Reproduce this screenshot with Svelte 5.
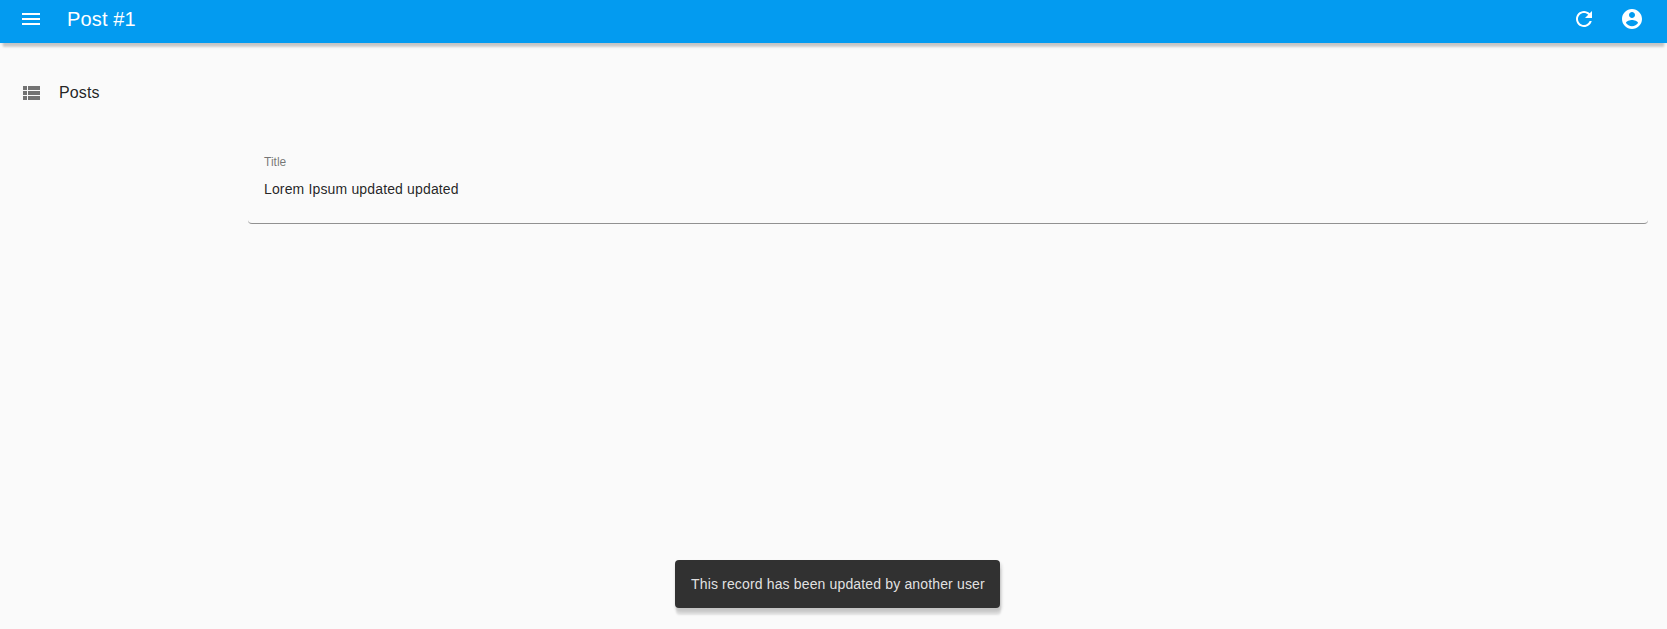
<script>
	const title = 'Post #1';
	const message = 'This record has been updated by another user';
</script>

<div class="page">
	<header class="appbar">
		<button class="icon-btn menu" aria-label="menu">
			<svg viewBox="0 0 24 24"><path d="M3 18h18v-2H3v2zm0-5h18v-2H3v2zm0-7v2h18V6H3z" /></svg>
		</button>
		<h1>{title}</h1>
		<div class="actions">
			<button class="icon-btn" aria-label="refresh">
				<svg viewBox="0 0 24 24"><path d="M17.65 6.35C16.2 4.9 14.21 4 12 4c-4.42 0-7.99 3.58-7.99 8s3.57 8 7.99 8c3.73 0 6.84-2.55 7.73-6h-2.08c-.82 2.33-3.04 4-5.65 4-3.31 0-6-2.69-6-6s2.69-6 6-6c1.66 0 3.14.69 4.22 1.78L13 11h7V4l-2.35 2.35z" /></svg>
			</button>
			<button class="icon-btn" aria-label="account">
				<svg viewBox="0 0 24 24"><path d="M12 2C6.48 2 2 6.48 2 12s4.48 10 10 10 10-4.48 10-10S17.52 2 12 2zm0 3c1.66 0 3 1.34 3 3s-1.34 3-3 3-3-1.34-3-3 1.34-3 3-3zm0 14.2c-2.5 0-4.71-1.28-6-3.22.03-1.99 4-3.08 6-3.08 1.99 0 5.97 1.09 6 3.08-1.29 1.94-3.5 3.22-6 3.22z" /></svg>
			</button>
		</div>
	</header>

	<div class="body">
		<nav class="sidebar">
			<a class="nav-item" href="#posts">
				<svg viewBox="0 0 24 24"><path d="M4 14h4v-4H4v4zm0 5h4v-4H4v4zM4 9h4V5H4v4zm5 5h12v-4H9v4zm0 5h12v-4H9v4zM9 5v4h12V5H9z" /></svg>
				<span>Posts</span>
			</a>
		</nav>
		<main class="content">
			<div class="card">
				<span class="label">Title</span>
				<span class="value">Lorem Ipsum updated updated</span>
			</div>
		</main>
	</div>

	<div class="snackbar">{message}</div>
</div>

<style>
	:global(body) {
		margin: 0;
		background: #fafafa;
		font-family: "Liberation Sans", Arial, sans-serif;
	}

	.page {
		position: relative;
		height: 629px;
		overflow: hidden;
		background: #fafafa;
	}

	.appbar {
		display: flex;
		align-items: center;
		height: 43px;
		padding: 0 11px 5px 7px;
		box-sizing: border-box;
		background: #039bf0;
		color: #fff;
		box-shadow: 0 7px 2px -3px rgba(0, 0, 0, 0.16), 0 2px 3px 0 rgba(0, 0, 0, 0.08);
	}

	.icon-btn {
		display: flex;
		align-items: center;
		justify-content: center;
		width: 48px;
		height: 38px;
		padding: 0;
		border: none;
		background: none;
		color: inherit;
	}

	.icon-btn svg {
		width: 24px;
		height: 24px;
		fill: currentColor;
	}

	.menu {
		width: 47px;
		margin-right: 13px;
	}

	h1 {
		margin: 0;
		flex: 1;
		font-size: 20px;
		font-weight: 400;
		letter-spacing: 0.0075em;
		line-height: 1.6;
	}

	.actions {
		display: flex;
	}

	.body {
		display: flex;
	}

	.sidebar {
		width: 248px;
		flex-shrink: 0;
		padding-top: 32px;
	}

	.nav-item {
		display: flex;
		align-items: center;
		gap: 16px;
		padding: 6px 19px;
		color: rgba(0, 0, 0, 0.87);
		font-size: 16px;
		letter-spacing: 0.00938em;
		line-height: 24px;
		text-decoration: none;
	}

	.nav-item svg {
		width: 24px;
		height: 24px;
		fill: rgba(0, 0, 0, 0.54);
	}

	.content {
		flex: 1;
		padding: 81px 19px 0 0;
	}

	.card {
		display: flex;
		flex-direction: column;
		height: 100px;
		padding: 31px 16px 0;
		box-sizing: border-box;
		border-bottom: 1px solid rgba(0, 0, 0, 0.42);
		border-radius: 4px;
	}

	.label {
		color: rgba(0, 0, 0, 0.54);
		font-size: 12px;
		line-height: 14px;
	}

	.value {
		margin-top: 10px;
		color: rgba(0, 0, 0, 0.87);
		font-size: 14px;
		letter-spacing: 0.01071em;
		line-height: 20px;
	}

	.snackbar {
		position: absolute;
		left: 675px;
		top: 560px;
		width: 325px;
		height: 48px;
		padding: 0 16px;
		box-sizing: border-box;
		display: flex;
		align-items: center;
		white-space: nowrap;
		border-radius: 4px;
		background: #313131;
		color: rgba(255, 255, 255, 0.87);
		font-size: 14px;
		letter-spacing: 0.01071em;
		box-shadow: 1px 3px 3px 1px rgba(0, 0, 0, 0.12), 1px 7px 2px 0 rgba(0, 0, 0, 0.1);
	}
</style>
